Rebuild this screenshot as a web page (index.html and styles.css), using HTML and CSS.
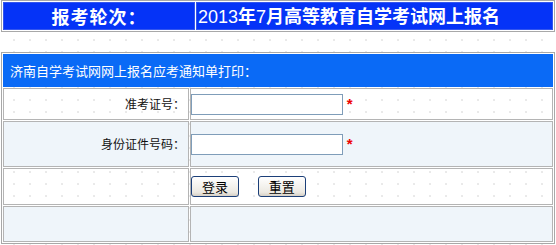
FILE: index.html
```html
<!DOCTYPE html>
<html lang="zh-CN">
<head>
    <meta charset="UTF-8">
    <title>网上报名应考通知单打印</title>
    <link rel="stylesheet" href="styles.css">
</head>
<body>
    <table class="round">
        <tr>
            <td class="round-label">报考轮次：</td>
            <td class="round-name"><span class="num">2013</span>年<span class="num">7</span>月高等教育自学考试网上报名</td>
        </tr>
    </table>

    <form action="#" method="post">
        <table class="notice">
            <tr>
                <td class="notice-title" colspan="2">济南自学考试网网上报名应考通知单打印：</td>
            </tr>
            <tr class="row-a">
                <td class="field-label">准考证号：</td>
                <td class="field"><input type="text" name="zkzh"> <span class="req">*</span></td>
            </tr>
            <tr class="row-b">
                <td class="field-label">身份证件号码：</td>
                <td class="field"><input type="text" name="sfzh"> <span class="req">*</span></td>
            </tr>
            <tr class="row-c">
                <td>&nbsp;</td>
                <td class="field">
                    <button type="submit">登录</button>
                    <button type="reset" class="reset">重置</button>
                </td>
            </tr>
            <tr class="row-d">
                <td>&nbsp;</td>
                <td>&nbsp;</td>
            </tr>
        </table>
    </form>
</body>
</html>
```

FILE: styles.css
```css
body {
    margin: 0;
    font-family: "Noto Sans CJK SC", "DejaVu Sans", sans-serif;
    font-size: 12px;
    line-height: 1.2;
    color: #000;
    background: #fff;
    background-image: radial-gradient(circle, #dedede 0.6px, transparent 0.9px);
    background-size: 16px 12px;
    background-position: 6px -2px;
}
table {
    border-collapse: separate;
}
.round {
    width: 554px;
    margin: 0 0 0 1px;
    border: 1px solid #a8a8a8;
    border-spacing: 1px;
    background: #fff;
}
.round td {
    height: 26px;
    padding: 0;
    line-height: 1;
    background: #0533f7;
    color: #fff;
    font-size: 18px;
    font-weight: bold;
    border: 1px solid #3355ee;
}
.round-label {
    width: 190px;
    text-align: center;
    letter-spacing: 1px;
}
.round-name {
    padding-left: 1px !important;
}
.round-name .num {
    font-family: "Liberation Sans", sans-serif;
    font-weight: normal;
}
form {
    margin: 20px 0 0 1px;
}
.notice {
    width: 554px;
    border: 1px solid #a8a8a8;
    border-spacing: 1px;
}
.notice td {
    padding: 0;
    border: 1px solid #b4b4b4;
}
.notice-title {
    height: 31px;
    padding-left: 6px !important;
    background: #0a6af6;
    color: #fff;
    font-size: 13px;
    border-color: #0a6af6 !important;
}
.field-label {
    width: 181px;
    padding-right: 3px !important;
    text-align: right;
    color: #111;
}
.row-a td { height: 30px; }
.row-b td { height: 44px; background: #eff5fa; }
.row-c td { height: 35px; }
.row-d td { height: 34px; background: #eff5fa; }
.field input {
    width: 148px;
    height: 17px;
    margin: 0;
    padding: 1px;
    border: 1px solid #7f9db9;
    vertical-align: middle;
    background: #fff;
}
.req {
    color: #e00;
    font-family: "Liberation Sans", sans-serif;
    font-size: 15px;
    font-weight: bold;
    vertical-align: middle;
    margin-left: 1px;
}
button {
    width: 48px;
    height: 21px;
    padding: 0;
    margin-left: 0;
    border: 1px solid #1c3f78;
    border-radius: 3px;
    background: linear-gradient(#ffffff, #ece9e2 80%, #d6d0c5);
    color: #000;
    font-family: "Noto Sans CJK SC", sans-serif;
    font-size: 13px;
    line-height: 1;
    cursor: pointer;
}
button.reset {
    margin-left: 16px;
}
```
